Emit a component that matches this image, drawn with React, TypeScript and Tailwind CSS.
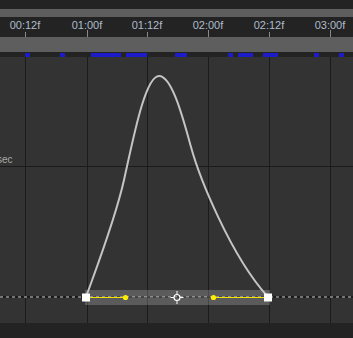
import React from "react"

const gridX = [25, 87, 147, 208, 269, 330]
const labels = ["00:12f", "01:00f", "01:12f", "02:00f", "02:12f", "03:00f"]
const blueMarks: [number, number][] = [
  [25, 30], [60, 65], [91, 121], [126, 147], [175, 187], [228, 233], [238, 253], [263, 278], [314, 319], [339, 344],
]

const curve = "M86,297 C96,269 115,220 124,180 C133,140 145,76 159,76 C172,76 183,118 191,147 C199,176 230,255 268,297"

export default function App() {
  return (
    <div className="w-[353px] h-[338px] bg-[#232323] flex flex-col overflow-hidden" style={{ fontFamily: "'Liberation Sans', Arial, sans-serif" }}>
      {/* top strip */}
      <div className="h-[9px] bg-[#232323]" />
      <div className="h-[8px] bg-[#5e5e5e]" />

      {/* ruler */}
      <div className="relative h-[20px] bg-[#232323]">
        {labels.map((l, i) => (
          <span
            key={l}
            className="absolute top-[1px] -translate-x-1/2 text-[11px] leading-[14px] text-[#aebccb]"
            style={{ left: gridX[i] }}
          >
            {l}
          </span>
        ))}
        {gridX.map((x, i) => (
          <div
            key={x}
            className={`absolute bottom-0 w-px bg-[#8a8a8a] ${i === 1 || i === 3 || i === 5 ? "h-[7px]" : "h-[5px]"}`}
            style={{ left: x }}
          />
        ))}
      </div>

      <div className="h-[15px] bg-[#5e5e5e]" />

      {/* marker strip */}
      <div className="relative h-[5px] bg-[#232323]">
        {blueMarks.map(([a, b]) => (
          <div key={a} className="absolute top-[1px] h-[4px] bg-[#1c1cc8]" style={{ left: a, width: b - a }} />
        ))}
      </div>

      {/* graph */}
      <div className="relative h-[266px] bg-[#333333]">
        <svg width="353" height="266" viewBox="0 57 353 266" className="absolute inset-0">
          {gridX.map((x) => (
            <line key={x} x1={x + 0.5} y1={57} x2={x + 0.5} y2={323} stroke="#1b1b1b" strokeWidth={1} />
          ))}
          <line x1={0} y1={166.5} x2={353} y2={166.5} stroke="#1b1b1b" strokeWidth={1} />
          <line x1={0} y1={297} x2={353} y2={297} stroke="#1b1b1b" strokeWidth={2} />
          <line x1={0} y1={297} x2={353} y2={297} stroke="#cfcfcf" strokeWidth={1} strokeDasharray="3 3" />

          {/* selection bar */}
          <rect x={85} y={290} width={185} height={15} fill="#ffffff" fillOpacity={0.2} />
          <rect x={85} y={297} width={185} height={1} fill="#3a3a3a" fillOpacity={0.5} />

          <path d={curve} fill="none" stroke="#c4c4c4" strokeWidth={2} strokeLinecap="round" />

          {/* handles */}
          <line x1={86} y1={297.5} x2={125} y2={297.5} stroke="#f2e400" strokeWidth={1} />
          <line x1={213} y1={297.5} x2={268} y2={297.5} stroke="#f2e400" strokeWidth={1} />
          <circle cx={125.5} cy={297.5} r={2.6} fill="#ffee00" />
          <circle cx={213.5} cy={297.5} r={2.6} fill="#ffee00" />

          {/* keyframes */}
          <rect x={82} y={293.5} width={8} height={8} fill="#ffffff" />
          <rect x={264} y={293.5} width={8} height={8} fill="#ffffff" />

          {/* center crosshair */}
          <circle cx={177} cy={297.5} r={3} fill="none" stroke="#ffffff" strokeWidth={1.2} />
          <line x1={177} y1={291} x2={177} y2={294.5} stroke="#ffffff" strokeWidth={1} />
          <line x1={177} y1={300.5} x2={177} y2={304} stroke="#ffffff" strokeWidth={1} />
          <line x1={170.5} y1={297.5} x2={174} y2={297.5} stroke="#ffffff" strokeWidth={1} />
          <line x1={180} y1={297.5} x2={183.5} y2={297.5} stroke="#ffffff" strokeWidth={1} />
        </svg>
        <span className="absolute left-[-3px] top-[97px] text-[10px] leading-[12px] text-[#aaaaaa]">sec</span>
      </div>

      <div className="h-[15px] bg-[#232323]" />
    </div>
  )
}
